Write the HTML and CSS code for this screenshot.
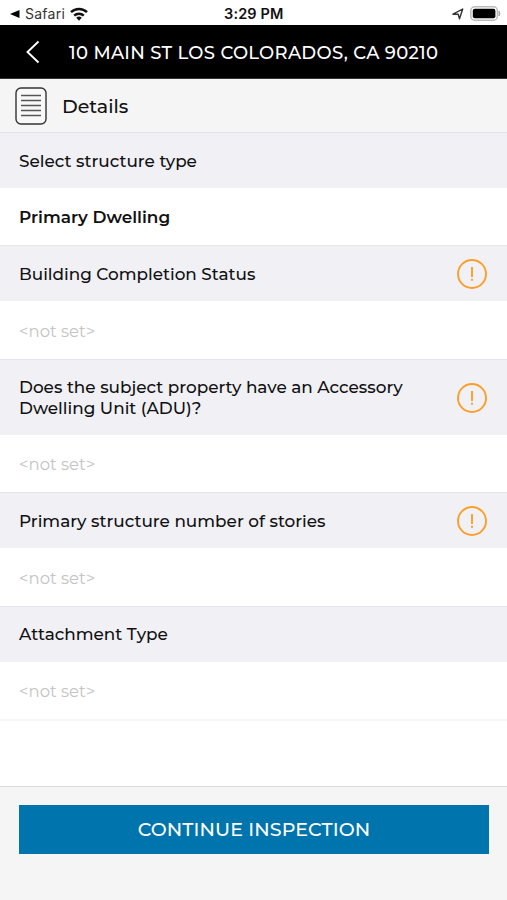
FILE: index.html
```html
<!DOCTYPE html>
<html lang="en">
<head>
<meta charset="utf-8">
<title>Details</title>
<link rel="stylesheet" href="styles.css">
</head>
<body>
<div class="screen">
  <div class="status">
    <div class="status-left">
      <svg width="10" height="8" viewBox="0 0 10 8"><path d="M0 4 9.500 0v8z"/></svg>
      <span class="return">Safari</span>
      <svg class="wifi" width="18" height="14" viewBox="0 0 18 14"><g fill="none" stroke="#111" stroke-width="2.500"><path d="M1 5.200a11.500 11.500 0 0 1 16 0"/><path d="M4.200 8.600a7 7 0 0 1 9.600 0"/></g><path d="M6.200 10.700a4.200 4.200 0 0 1 5.600 0L9 13.700z" fill="#111"/></svg>
    </div>
    <span class="time">3:29 PM</span>
    <div class="status-right">
      <svg width="12" height="12" viewBox="0 0 12 12"><path d="M1 6.200 10.700 1 7.500 10.800 6.200 6.300z" fill="none" stroke="#333" stroke-width="1.400" stroke-linejoin="round"/></svg>
      <svg width="31" height="15" viewBox="0 0 31 15"><rect x=".8" y=".8" width="26.600" height="13.400" rx="4" fill="#fff" stroke="#bbb" stroke-width="1.500"/><rect x="2.800" y="2.800" width="22.600" height="9.400" rx="2"/><path d="M29 5q1.800 2.500 0 5z" fill="#aaa" stroke="#aaa"/></svg>
    </div>
  </div>
  <header class="nav">
    <svg class="back" width="14" height="24" viewBox="0 0 14 24"><path d="M12.500 1.500 1.500 12l11 10.500" fill="none" stroke="#fff" stroke-width="1.900"/></svg>
    <h1>10 MAIN ST LOS COLORADOS, CA 90210</h1>
  </header>
  <div class="subhead">
    <svg width="32" height="38" viewBox="0 0 32 38"><rect x="1" y="1" width="30" height="36" rx="5" fill="#f8f8f8" stroke="#333" stroke-width="1.400"/><path d="M6 8.500h20M6 13.500h20M6 18.500h20M6 23.500h20M6 28.500h20" stroke="#555" stroke-width="1.600"/></svg>
    <h2>Details</h2>
  </div>
  <main class="form">
    <div class="label first"><span>Select structure type</span></div>
    <div class="value chosen"><span>Primary Dwelling</span></div>
    <div class="label"><span>Building Completion Status</span>
      <svg class="alert" viewBox="0 0 30 30"><circle cx="15" cy="15" r="14"/><path d="M15 8v10"/><path d="M15 19.800v2"/></svg></div>
    <div class="value"><span>&lt;not set&gt;</span></div>
    <div class="label tall"><span>Does the subject property have an Accessory<br>Dwelling Unit (ADU)?</span>
      <svg class="alert" viewBox="0 0 30 30"><circle cx="15" cy="15" r="14"/><path d="M15 8v10"/><path d="M15 19.800v2"/></svg></div>
    <div class="value"><span>&lt;not set&gt;</span></div>
    <div class="label"><span>Primary structure number of stories</span>
      <svg class="alert" viewBox="0 0 30 30"><circle cx="15" cy="15" r="14"/><path d="M15 8v10"/><path d="M15 19.800v2"/></svg></div>
    <div class="value"><span>&lt;not set&gt;</span></div>
    <div class="label"><span>Attachment Type</span></div>
    <div class="value last"><span>&lt;not set&gt;</span></div>
  </main>
  <footer class="actions"><button>CONTINUE INSPECTION</button></footer>
</div>
</body>
</html>
```
FILE: styles.css
```css
* { box-sizing: border-box; }
body { margin: 0; font-family: Montserrat, Inter, sans-serif; color: #111; background: #fff; }
svg { display: block; flex: none; }
span { white-space: nowrap; }
.screen { height: 900px; display: flex; flex-direction: column; }
.status { height: 25px; flex: none; display: grid; grid-template-columns: 1fr auto 1fr; align-items: center; padding: 2px 6px 0 10px; font-family: Inter, sans-serif; font-size: 14px; }
.status-left, .status-right { display: flex; align-items: center; }
.status-left { gap: 5px; }
.return { color: #333; letter-spacing: .25px; }
.status-right { justify-content: flex-end; gap: 6px; }
.time { font-weight: 600; font-size: 14.5px; letter-spacing: .15px; }
.nav { height: 54px; flex: none; background: #000; color: #fff; display: flex; align-items: center; padding-left: 26px; border-bottom: 1px solid #333; }
h1 { margin: 3px 0 0 29px; font-size: 18px; font-weight: 500; letter-spacing: .3px; white-space: nowrap; }
.subhead { height: 54px; flex: none; display: flex; align-items: center; gap: 15px; padding-left: 15px; background: #f5f5f5; border-bottom: 1px solid #e4e4e8; }
h2 { margin: 1px 0 0; font-size: 19px; font-weight: 500; }
.form { flex: 1; font-size: 16.850px; line-height: 21px; }
.label { height: 56.300px; display: flex; align-items: center; justify-content: space-between; padding: .8px 20.500px 0 19px; background: #f0f0f5; border-top: 1px solid #e6e6ea; font-weight: 500; }
.label.first { height: 55px; border-top: 0; padding-top: 1px; }
.label.tall { height: 76.300px; }
.value { height: 57.200px; display: flex; align-items: center; padding: 2px 19px 0; color: #c4c4c4; font-size: 16.500px; }
.value.chosen { color: #111; font-weight: 600; font-size: 16.900px; padding-top: 1px; }
.value.last { height: 59px; border-bottom: 2px solid #f5f5f5; }
.alert { width: 30px; height: 30px; fill: none; stroke: #fa9f28; stroke-width: 1.900; }
.actions { height: 114px; flex: none; padding: 18px 18px 0 19px; background: #f5f5f5; border-top: 1px solid #dcdcdc; }
button { display: block; width: 100%; height: 49px; border: 0; padding: 0; background: #0075ad; color: #fff; font: 500 19px Montserrat, Inter, sans-serif; letter-spacing: .1px; }
.status { grid-template-columns: 214px auto 1fr; }
```
